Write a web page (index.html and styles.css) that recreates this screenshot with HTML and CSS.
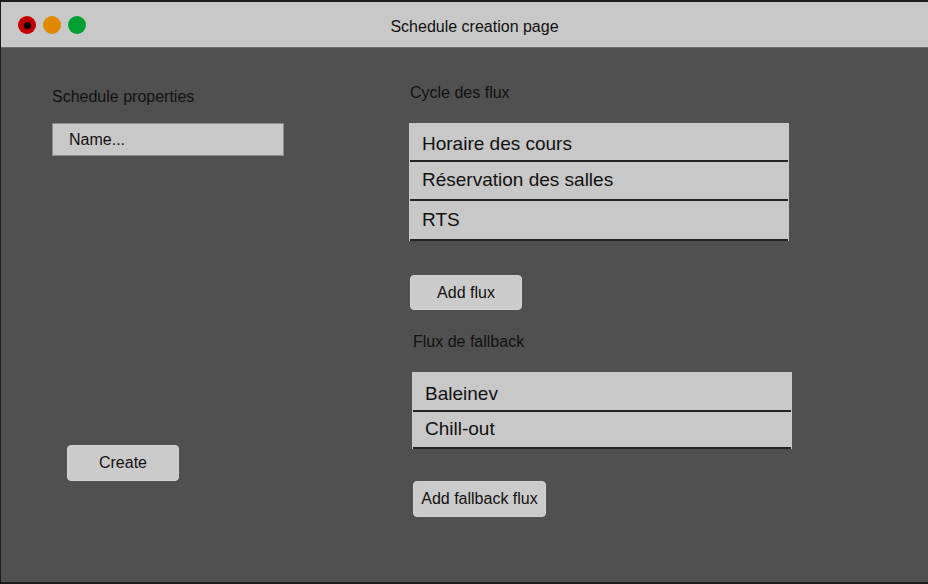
FILE: index.html
```html
<!DOCTYPE html>
<html>
<head>
<meta charset="utf-8">
<link rel="stylesheet" href="styles.css">
</head>
<body>
<div class="window">
  <div class="titlebar">
    <div class="lights">
      <span class="light red"><span class="dot"></span></span>
      <span class="light orange"></span>
      <span class="light green"></span>
    </div>
    <div class="title">Schedule creation page</div>
  </div>
  <div class="content">
    <div class="left">
      <div class="label">Schedule properties</div>
      <div class="input">Name...</div>
      <button class="btn create">Create</button>
    </div>
    <div class="right">
      <div class="label">Cycle des flux</div>
      <div class="list cycle">
        <div class="row">Horaire des cours</div>
        <div class="row">Réservation des salles</div>
        <div class="row">RTS</div>
      </div>
      <button class="btn add">Add flux</button>
      <div class="label fb-label">Flux de fallback</div>
      <div class="list fallback">
        <div class="row">Baleinev</div>
        <div class="row">Chill-out</div>
      </div>
      <button class="btn add-fb">Add fallback flux</button>
    </div>
  </div>
</div>
</body>
</html>
```

FILE: styles.css
```css
* { box-sizing: border-box; }
html, body { margin: 0; padding: 0; }
body {
  width: 928px;
  height: 584px;
  overflow: hidden;
  background: #505050;
  font-family: "Liberation Sans", Arial, sans-serif;
  color: #111;
}
.window {
  width: 928px;
  height: 584px;
  border-top: 2px solid #1c1c1c;
  border-left: 1px solid #1c1c1c;
  border-bottom: 2px solid #1c1c1c;
  background: #505050;
  display: flex;
  flex-direction: column;
}
.titlebar {
  height: 46px;
  flex: none;
  background: #c8c8c8;
  border-bottom: 1px solid #6c6c6c;
  display: flex;
  align-items: center;
  padding-left: 17px;
  padding-right: 65px;
}
.lights {
  display: flex;
  gap: 7px;
  width: 68px;
  margin-top: 1px;
}
.light {
  width: 18px;
  height: 18px;
  border-radius: 50%;
  display: flex;
  align-items: center;
  justify-content: center;
}
.red { background: #c00000; }
.orange { background: #e08900; }
.green { background: #00a033; }
.dot {
  width: 7px;
  height: 7px;
  border-radius: 50%;
  background: #000;
}
.title {
  flex: 1;
  text-align: center;
  font-size: 16px;
  margin-top: 4px;
}
.content {
  flex: 1;
  display: flex;
  padding-left: 51px;
}
.label {
  font-size: 16px;
  line-height: 18px;
}
.left {
  width: 232px;
  padding-top: 40px;
  display: flex;
  flex-direction: column;
  align-items: flex-start;
}
.input {
  margin-top: 17px;
  width: 232px;
  height: 33px;
  background: #c8c8c8;
  border: 1px solid #8c8c8c;
  font-size: 16px;
  padding-left: 16px;
  display: flex;
  align-items: center;
}
.btn {
  font-family: "Liberation Sans", Arial, sans-serif;
  font-size: 16px;
  color: #111;
  background: #cbcbcb;
  border: 1px solid #d4d4d4;
  border-radius: 4px;
  padding: 0;
}
.create {
  margin-top: 289px;
  margin-left: 15px;
  width: 112px;
  height: 36px;
}
.right {
  margin-left: 125px;
  padding-top: 36px;
  display: flex;
  flex-direction: column;
  align-items: flex-start;
}
.right > .label { margin-left: 1px; }
.list {
  margin-top: 21px;
  width: 380px;
  background: #c8c8c8;
}
.row {
  height: 39px;
  margin: 0 1px;
  padding-left: 12px;
  font-size: 19px;
  display: flex;
  align-items: center;
  border-bottom: 2px solid #242424;
}
.cycle .row:first-child { padding-top: 4px; }
.cycle .row:nth-child(2) { padding-bottom: 2px; }
.cycle .row:last-child { height: 40px; }
.add {
  margin-top: 34px;
  margin-left: 1px;
  width: 112px;
  height: 35px;
}
.right > .fb-label {
  margin-top: 23px;
  margin-left: 4px;
}
.fallback {
  margin-left: 3px;
}
.fallback .row:first-child { height: 40px; padding-top: 6px; }
.fallback .row:last-child { height: 37px; padding-bottom: 2px; }
.add-fb {
  margin-top: 32px;
  margin-left: 4px;
  width: 133px;
  height: 36px;
}
```
